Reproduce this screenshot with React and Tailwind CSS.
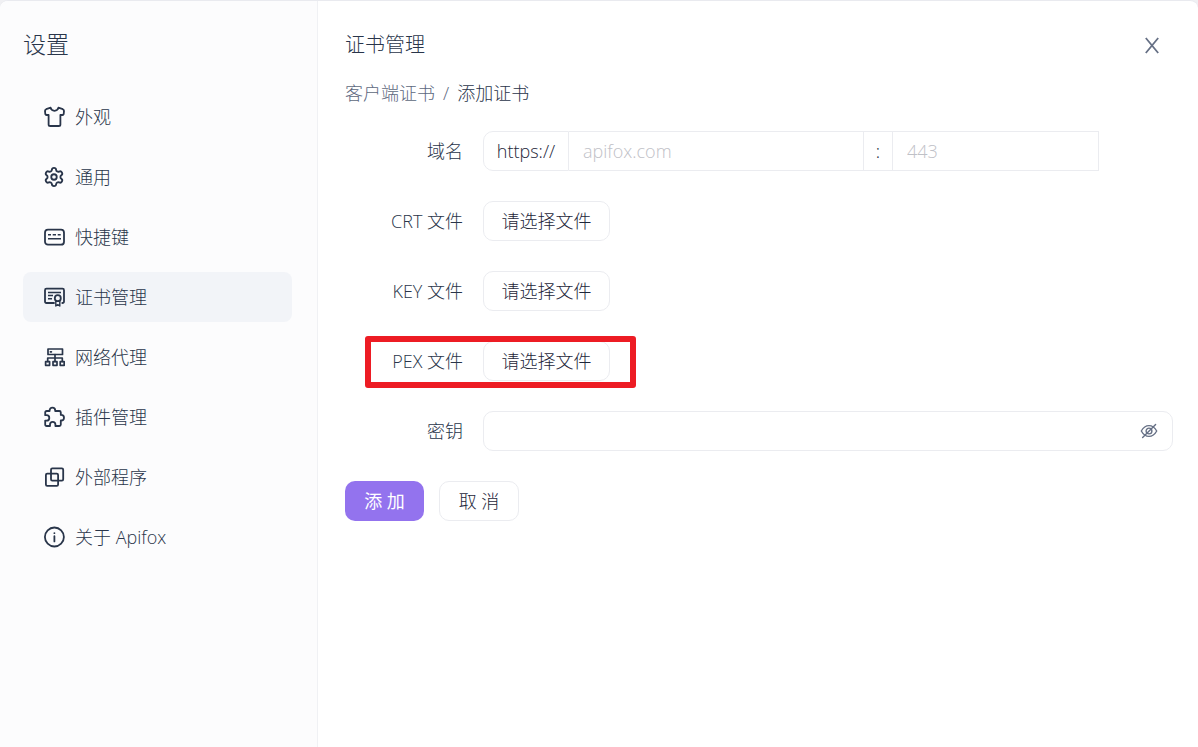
import { Settings } from 'lucide-react';

function Icon({ children }) {
  return (
    <svg
      viewBox="0 0 22 22"
      className="w-[22px] h-[22px] shrink-0"
      fill="none"
      stroke="currentColor"
      strokeWidth="1.8"
      strokeLinecap="round"
      strokeLinejoin="round"
      aria-hidden="true"
    >
      {children}
    </svg>
  );
}

const ShirtIcon = () => (
  <Icon>
    <path d="M7.6 1.7 L3.2 3.2 Q1.9 3.8 2 5.2 L2.3 8 Q2.5 9 3.5 9 H5.6 V18.4 Q5.6 20 7.2 20 H15.8 Q17.4 20 17.4 18.4 V9 H19.5 Q20.5 9 20.7 8 L21 5.2 Q21.1 3.8 19.8 3.2 L15.4 1.7 Q14.8 4.8 11.5 4.8 Q8.2 4.8 7.6 1.7 Z" />
  </Icon>
);

const KeyboardIcon = () => (
  <Icon>
    <rect x="2" y="3.7" width="19" height="15" rx="3" />
    <path d="M5 8.8 H8 M9.7 8.8 H13 M14.7 8.8 H17.7 M5 12.8 H18" strokeLinecap="butt" strokeWidth="1.6" />
  </Icon>
);

const CertificateIcon = () => (
  <Icon>
    <path d="M11 17 H3.5 Q2 17 2 15.5 V4.2 Q2 2.7 3.5 2.7 H19.5 Q21 2.7 21 4.2 V15.5 Q21 17 19.3 17" />
    <path d="M5 6.4 H18 M5 9.6 H10 M5 12.8 H9" strokeLinecap="butt" strokeWidth="1.5" />
    <circle cx="14.8" cy="12.2" r="3" />
    <path d="M12.8 15 V20 L14.8 18.6 L16.8 20 V15" strokeWidth="1.4" />
  </Icon>
);

const NetworkIcon = () => (
  <Icon>
    <g strokeWidth="1.7">
      <rect x="5" y="3" width="14.5" height="5.5" />
      <path d="M7.4 5.8 H8.4 M12 8.5 V15.5 M4.7 15.5 V12 H19.3 V15.5" />
      <rect x="2.6" y="15.7" width="4" height="3.6" />
      <rect x="10" y="15.7" width="4" height="3.6" />
      <rect x="17.2" y="15.7" width="4" height="3.6" />
    </g>
  </Icon>
);

const PuzzleIcon = () => (
  <Icon>
    <path d="M2.2 6.5 Q2.2 5 3.7 5 H6.6 V4.4 A2.8 2.8 0 0 1 12.2 4.4 V5 H16.3 Q17.8 5 17.8 6.5 V8.9 H18.2 A2.8 2.8 0 0 1 18.2 14.5 H17.8 V18.5 Q17.8 20 16.3 20 H12.4 V18.6 A2.7 2.7 0 0 0 7 18.6 V20 H3.7 Q2.2 20 2.2 18.5 V14.6 H3.6 A2.7 2.7 0 0 0 3.6 9.2 H2.2 Z" />
  </Icon>
);

const ExternalIcon = () => (
  <Icon>
    <rect x="2.9" y="7.7" width="12.2" height="12.2" rx="1.3" />
    <rect x="8" y="2.4" width="12.2" height="12.2" rx="1.3" />
  </Icon>
);

const AboutIcon = () => (
  <Icon>
    <circle cx="11.4" cy="11" r="9.5" />
    <path d="M11.4 10.2 V15.4 M11.4 7.1 V7.2" />
  </Icon>
);

const MENU = [
  { label: '外观', icon: <ShirtIcon /> },
  { label: '通用', icon: <Settings size={22} strokeWidth={2} className="shrink-0" /> },
  { label: '快捷键', icon: <KeyboardIcon /> },
  { label: '证书管理', icon: <CertificateIcon />, active: true },
  { label: '网络代理', icon: <NetworkIcon /> },
  { label: '插件管理', icon: <PuzzleIcon /> },
  { label: '外部程序', icon: <ExternalIcon /> },
  { label: '关于 Apifox', icon: <AboutIcon /> },
];

function Sidebar() {
  return (
    <aside className="w-[318px] shrink-0 bg-[#fcfcfd] border-r border-[#f0f1f4] pl-[23px] pr-[25px] pt-[23px]">
      <h1 className="text-[23px] leading-10 font-light">设置</h1>
      <nav className="mt-7 flex flex-col gap-[10px]">
        {MENU.map((item) => (
          <button
            key={item.label}
            type="button"
            className={`flex items-center gap-[10px] h-[50px] px-5 rounded-lg text-left ${
              item.active ? 'bg-[#f2f4f8]' : ''
            }`}
          >
            {item.icon}
            <span>{item.label}</span>
          </button>
        ))}
      </nav>
    </aside>
  );
}

function FormRow({ label, htmlFor, marked, children }) {
  return (
    <div className="relative flex items-center h-10">
      <label htmlFor={htmlFor} className="w-[118px] mr-5 shrink-0 text-right">
        {label}
      </label>
      {children}
      {marked && (
        <span className="absolute left-5 -top-[5px] w-[271px] h-[52px] border-6 border-[#ed1c24] rounded-[3px] pointer-events-none" />
      )}
    </div>
  );
}

function FileButton({ id }) {
  return (
    <button id={id} type="button" className="h-10 w-[127px] border border-[#ebecf0] rounded-[10px] text-[#1d2639]">
      请选择文件
    </button>
  );
}

export default function App() {
  return (
    <div className="bg-[#f0f0f3]">
      <div className="flex min-h-screen border-t border-[#e9eaef] rounded-t-lg overflow-hidden bg-white text-lg leading-7 font-light text-[#29354a] font-['Open_Sans','Noto_Sans_CJK_SC',sans-serif]">
        <Sidebar />
        <main className="flex-1 min-w-0 pl-[27px] pr-[25px] pt-7">
          <header className="flex items-center justify-between h-8">
            <h2 className="text-xl font-light">证书管理</h2>
            <button type="button" aria-label="关闭" className="mr-3 text-[#667085]">
              <svg viewBox="0 0 18 18" className="w-[18px] h-[18px]" fill="none" stroke="currentColor" strokeWidth="1.8">
                <path d="M2.8 2 L15.2 17 M15.2 2 L2.8 17" />
              </svg>
            </button>
          </header>

          <nav className="flex items-center gap-2 h-7 mt-[18px]">
            <a href="#certs" className="text-[#5d6880]">客户端证书</a>
            <span className="text-[#5d6880]">/</span>
            <span>添加证书</span>
          </nav>

          <form className="flex flex-col gap-[30px] mt-6" onSubmit={(e) => e.preventDefault()}>
            <FormRow label="域名" htmlFor="domain">
              <div className="flex flex-1 min-w-0 h-10 mr-[74px]">
                <span className="w-[86px] shrink-0 flex items-center justify-center border border-[#ebecf0] rounded-l-[10px] text-[#1d2639]">
                  https://
                </span>
                <input
                  id="domain"
                  placeholder="apifox.com"
                  className="flex-1 min-w-0 border-y border-[#ebecf0] px-[14px] outline-none placeholder:text-[#bfc1c7]"
                />
                <span className="w-[29px] shrink-0 flex items-center justify-center border border-r-0 border-[#ebecf0] text-[#1d2639]">
                  :
                </span>
                <input
                  aria-label="端口"
                  placeholder="443"
                  className="w-[207px] border border-[#ebecf0] px-[14px] outline-none placeholder:text-[#bfc1c7]"
                />
              </div>
            </FormRow>

            <FormRow label="CRT 文件" htmlFor="crt">
              <FileButton id="crt" />
            </FormRow>
            <FormRow label="KEY 文件" htmlFor="key">
              <FileButton id="key" />
            </FormRow>
            <FormRow label="PEX 文件" htmlFor="pex" marked>
              <FileButton id="pex" />
            </FormRow>

            <FormRow label="密钥" htmlFor="secret">
              <div className="flex flex-1 min-w-0 items-center h-10 px-[14px] border border-[#ebecf0] rounded-[10px]">
                <input id="secret" type="password" className="flex-1 min-w-0 outline-none" />
                <button type="button" aria-label="显示密钥" className="text-[#667085]">
                  <svg viewBox="0 0 18 18" className="w-[18px] h-[18px]" fill="none" stroke="currentColor" strokeWidth="1.4" strokeLinecap="round">
                    <path d="M1.3 9 Q4.3 3.6 9 3.6 Q13.7 3.6 16.7 9 Q13.7 14.4 9 14.4 Q4.3 14.4 1.3 9 Z" />
                    <circle cx="9" cy="9" r="2.9" />
                    <path d="M2.6 15.4 L15.6 2.4" />
                  </svg>
                </button>
              </div>
            </FormRow>

            <div className="flex gap-[15px]">
              <button type="submit" className="w-[79px] h-10 rounded-[10px] bg-[#9373ee] text-white font-normal">
                添 加
              </button>
              <button type="button" className="w-20 h-10 rounded-[10px] border border-[#ebecf0] text-[#1d2639]">
                取 消
              </button>
            </div>
          </form>
        </main>
      </div>
    </div>
  );
}
